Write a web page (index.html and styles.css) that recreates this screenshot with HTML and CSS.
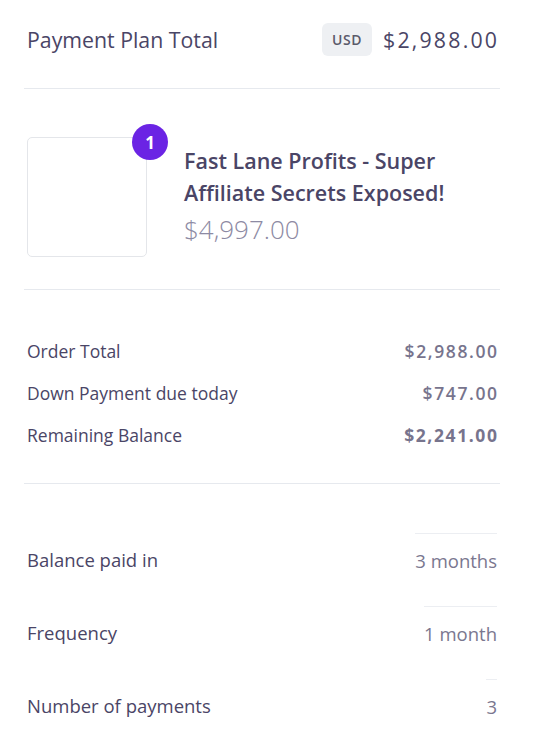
FILE: index.html
```
<!DOCTYPE html>
<html>
<head>
<meta charset="utf-8">
<link rel="stylesheet" href="styles.css">
</head>
<body>
<div class="summary">
  <div class="header">
    <span class="header-title">Payment Plan Total</span>
    <span class="header-right">
      <span class="currency">USD</span>
      <span class="header-amount">$2,988.00</span>
    </span>
  </div>
  <div class="product">
    <div class="thumb-wrap">
      <div class="thumb"></div>
      <span class="qty">1</span>
    </div>
    <div class="product-info">
      <div class="product-name">Fast Lane Profits - Super Affiliate Secrets Exposed!</div>
      <div class="product-price">$4,997.00</div>
    </div>
  </div>
  <div class="totals">
    <div class="total-row"><span>Order Total</span><span class="val">$2,988.00</span></div>
    <div class="total-row"><span>Down Payment due today</span><span class="val">$747.00</span></div>
    <div class="total-row"><span>Remaining Balance</span><span class="val strong">$2,241.00</span></div>
  </div>
  <dl class="plan">
    <div class="plan-row"><dt>Balance paid in</dt><dd>3 months</dd></div>
    <div class="plan-row"><dt>Frequency</dt><dd>1 month</dd></div>
    <div class="plan-row"><dt>Number of payments</dt><dd>3</dd></div>
  </dl>
</div>
</body>
</html>
```
FILE: styles.css
```
* { box-sizing: border-box; }
body {
  margin: 0;
  background: #fff;
  font-family: "Open Sans", "Noto Sans", sans-serif;
  color: #4a4566;
}
.summary {
  width: 476px;
  margin-left: 24px;
}
.header {
  display: flex;
  justify-content: space-between;
  align-items: center;
  padding: 23px 3px 32px;
  border-bottom: 1px solid #e6e9ee;
}
.header-title {
  font-size: 21.3px;
  color: #4a4566;
}
.header-right {
  display: flex;
  align-items: center;
  gap: 11px;
}
.currency {
  display: inline-flex;
  align-items: center;
  justify-content: center;
  width: 50px;
  height: 33px;
  border-radius: 6px;
  background: #eef0f3;
  color: #5a5a6a;
  font-size: 14px;
  font-weight: 600;
  letter-spacing: 0.5px;
}
.header-amount {
  font-size: 21.3px;
  letter-spacing: 2.2px;
  margin-right: -2.2px;
  color: #4a4566;
}
.product {
  display: flex;
  align-items: center;
  gap: 37px;
  padding: 48px 3px 32px;
  border-bottom: 1px solid #e6e9ee;
}
.thumb-wrap {
  position: relative;
  flex: none;
}
.thumb {
  width: 120px;
  height: 120px;
  border: 1px solid #e4e6ea;
  border-radius: 5px;
}
.qty {
  position: absolute;
  top: -13px;
  right: -21px;
  width: 36px;
  height: 36px;
  border-radius: 50%;
  background: #6b24e4;
  color: #fff;
  font-size: 17px;
  font-weight: 700;
  display: flex;
  align-items: center;
  justify-content: center;
}
.product-info {
  margin-top: -5px;
}
.product-name {
  font-size: 21.5px;
  font-weight: 600;
  line-height: 32px;
  color: #4a4566;
  max-width: 300px;
}
.product-price {
  margin-top: 4px;
  font-size: 26px;
  font-weight: 300;
  color: #8d8aa3;
  line-height: 32px;
}
.totals {
  padding: 40px 3px 27px;
  border-bottom: 1px solid #e6e9ee;
}
.total-row {
  display: flex;
  justify-content: space-between;
  align-items: center;
  height: 42px;
  font-size: 17.5px;
  color: #4a4566;
}
.total-row .val {
  font-weight: 600;
  letter-spacing: 1.6px;
  margin-right: -1.6px;
  color: #77748d;
}
.total-row .val.strong {
  font-weight: 700;
}
.plan {
  margin: 0;
  padding: 49px 3px 0;
}
.plan-row {
  display: flex;
  justify-content: space-between;
  align-items: flex-start;
  height: 73px;
  font-size: 18.5px;
}
.plan-row dt {
  padding-top: 15px;
  line-height: 24px;
  color: #4a4566;
}
.plan-row dd {
  margin: 0;
  padding-top: 15px;
  line-height: 24px;
  border-top: 1px solid #eceef2;
  color: #7a778f;
}
```
